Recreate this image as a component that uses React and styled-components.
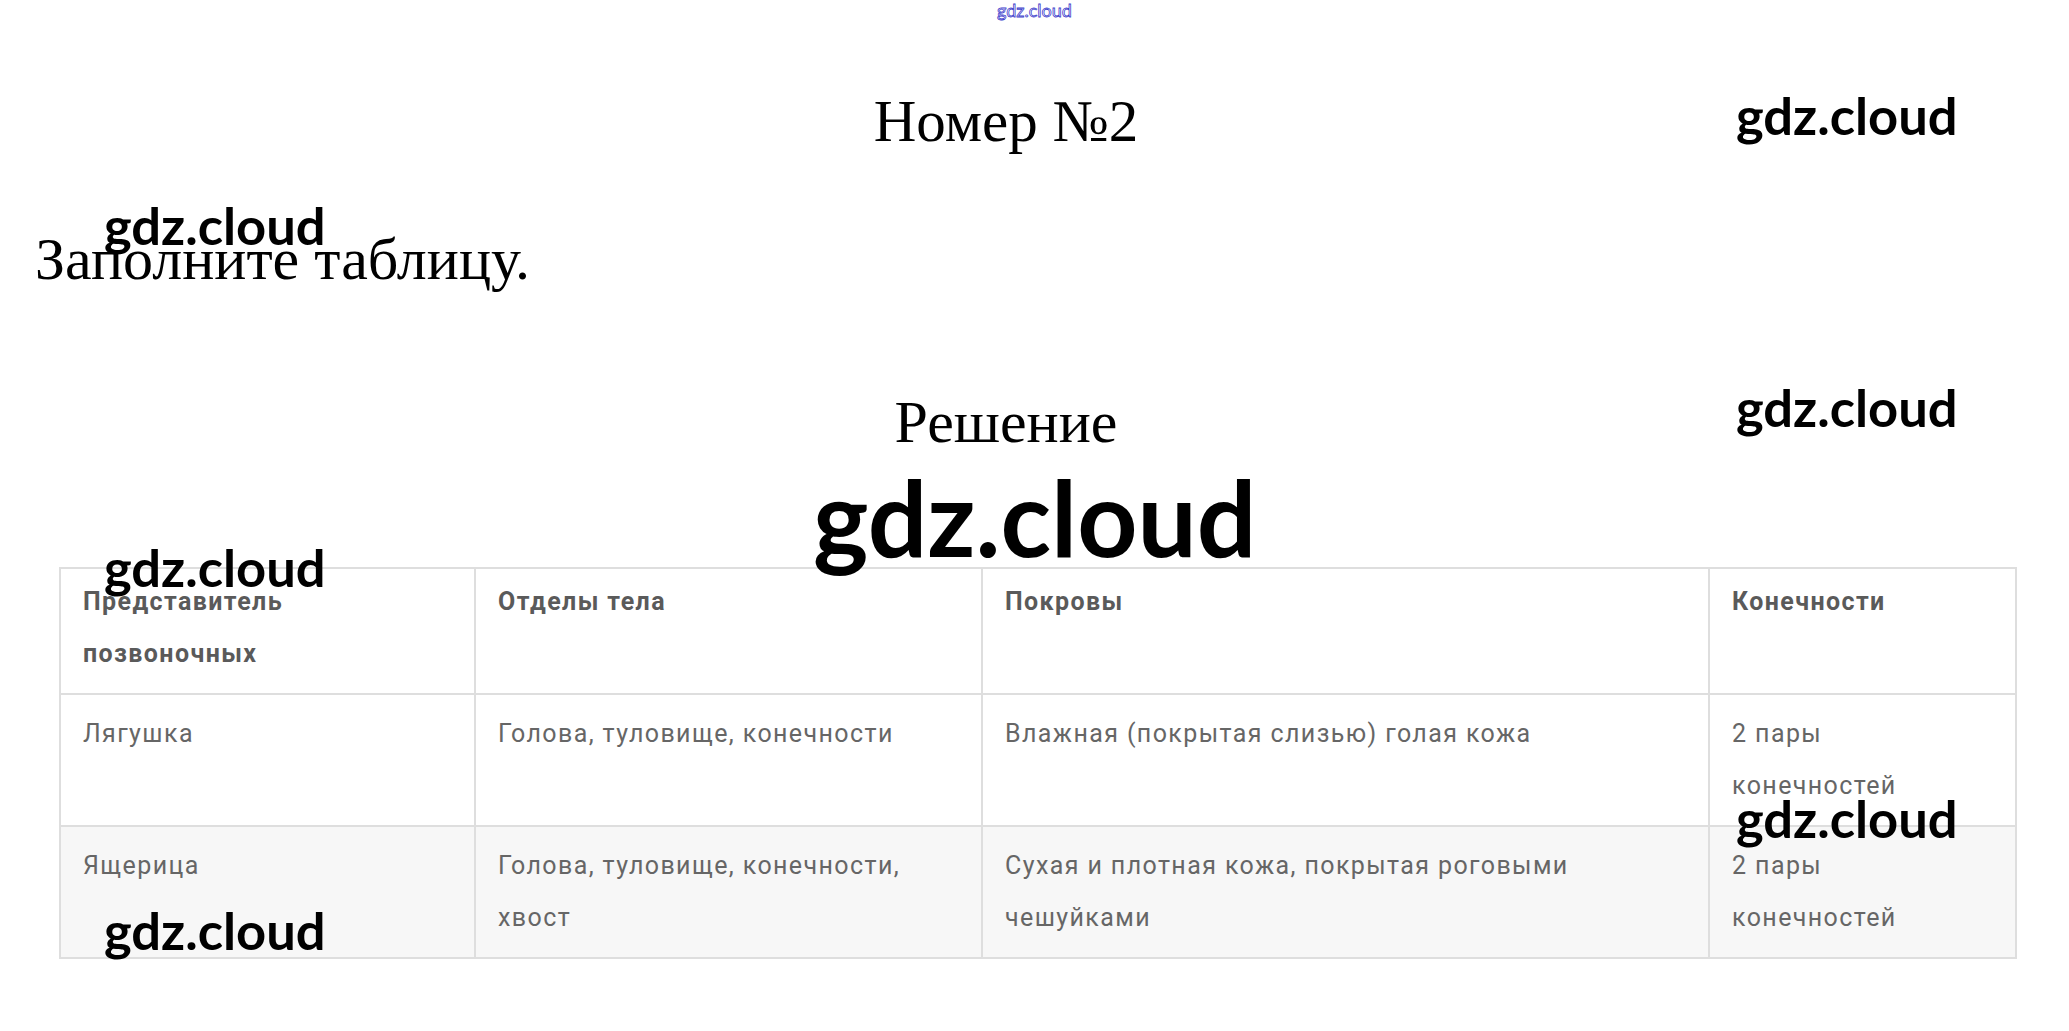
import React from "react";
import styled, { createGlobalStyle } from "styled-components";

const GlobalStyle = createGlobalStyle`
  html, body {
    margin: 0;
    padding: 0;
    background: #fff;
  }
`;

const Page = styled.div`
  position: relative;
  width: 2069px;
  height: 1031px;
  overflow: hidden;
  background: #fff;
  color: #000;
  font-family: "Liberation Serif", "Times New Roman", serif;
`;

const Content = styled.div`
  display: flex;
  flex-direction: column;
  padding-top: 87px;
`;

const Title = styled.h1`
  margin: 0;
  width: 2012px;
  text-align: center;
  font-size: 59px;
  font-weight: 400;
  line-height: normal;
`;

const Task = styled.p`
  margin: 69px 0 0 35px;
  font-size: 60px;
  line-height: normal;
`;

const Subtitle = styled.h2`
  margin: 94px 0 0;
  width: 2012px;
  text-align: center;
  font-size: 60px;
  font-weight: 400;
  line-height: normal;
`;

const Table = styled.table`
  margin: 110px 0 0 59px;
  width: 1956px;
  border-collapse: collapse;
  table-layout: fixed;
  font-family: Roboto, "Liberation Sans", sans-serif;
  font-size: 25px;
  letter-spacing: 1.4px;
  line-height: 52px;
`;

const Row = styled.tr`
  background: ${(p) => (p.$shaded ? "#f7f7f7" : "#fff")};
`;

const HeadCell = styled.th`
  border: 2px solid #dedede;
  padding: 7px 22px 13px;
  text-align: left;
  vertical-align: top;
  font-weight: 700;
  color: #5a5a5a;
`;

const Cell = styled.td`
  border: 2px solid #dedede;
  padding: 13px 22px;
  vertical-align: top;
  white-space: pre-line;
  color: #666;
`;

const Watermark = styled.span`
  position: absolute;
  left: ${(p) => p.$x}px;
  top: ${(p) => p.$y}px;
  font-family: Lato, "Open Sans", sans-serif;
  font-size: ${(p) => p.$size}px;
  font-weight: 700;
  line-height: 1;
  color: #000;
  white-space: nowrap;
`;

const TopMark = styled.span`
  position: absolute;
  left: 997px;
  top: 1px;
  font-family: Lato, sans-serif;
  font-size: 18px;
  line-height: 1;
  color: #fff;
  -webkit-text-stroke: 0.8px #4040cc;
`;

const cols = [415, 507, 727, 307];

const rows = [
  ["Лягушка", "Голова, туловище, конечности", "Влажная (покрытая слизью) голая кожа", "2 пары\nконечностей"],
  ["Ящерица", "Голова, туловище, конечности, хвост", "Сухая и плотная кожа, покрытая роговыми чешуйками", "2 пары\nконечностей"],
];

const marks = [
  { x: 1736, y: 89, size: 52.5 },
  { x: 104, y: 199, size: 52.5 },
  { x: 1736, y: 381, size: 52.5 },
  { x: 813, y: 464, size: 105 },
  { x: 104, y: 541, size: 52.5 },
  { x: 1736, y: 792, size: 52.5 },
  { x: 104, y: 904, size: 52.5 },
];

export default function App() {
  return (
    <>
      <GlobalStyle />
      <Page>
        <TopMark>gdz.cloud</TopMark>
        <Content>
          <Title>Номер №2</Title>
          <Task>Заполните таблицу.</Task>
          <Subtitle>Решение</Subtitle>
          <Table>
            <colgroup>
              {cols.map((w, i) => (
                <col key={i} style={{ width: w }} />
              ))}
            </colgroup>
            <thead>
              <Row>
                <HeadCell>Представитель позвоночных</HeadCell>
                <HeadCell>Отделы тела</HeadCell>
                <HeadCell>Покровы</HeadCell>
                <HeadCell>Конечности</HeadCell>
              </Row>
            </thead>
            <tbody>
              {rows.map((r, i) => (
                <Row key={i} $shaded={i === 1}>
                  {r.map((c, j) => (
                    <Cell key={j}>{c}</Cell>
                  ))}
                </Row>
              ))}
            </tbody>
          </Table>
        </Content>
        {marks.map((m, i) => (
          <Watermark key={i} $x={m.x} $y={m.y} $size={m.size}>
            gdz.cloud
          </Watermark>
        ))}
      </Page>
    </>
  );
}
